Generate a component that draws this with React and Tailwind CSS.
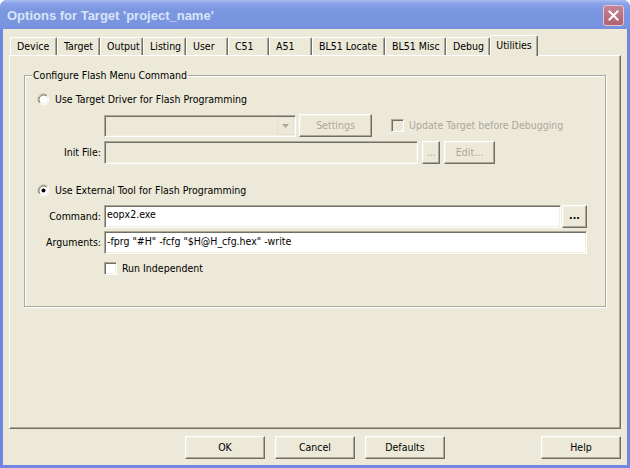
import React from "react";

const raised =
  "border border-t-white border-l-white border-r-[#716F64] border-b-[#716F64] shadow-[inset_-1px_-1px_0_#ACA899,inset_1px_1px_0_#F1EFE2] bg-[#ECE9D8]";
const sunken =
  "border border-t-[#ACA899] border-l-[#ACA899] border-r-white border-b-white shadow-[inset_1px_1px_0_#716F64,inset_-1px_-1px_0_#F1EFE2]";

function Radio({ checked }) {
  return (
    <svg width="13" height="13" viewBox="0 0 13 13" className="shrink-0">
      <circle cx="6.5" cy="6.5" r="5" fill="white" />
      <path d="M2.61 10.39 A5.5 5.5 0 0 1 10.39 2.61" stroke="#ACA899" fill="none" />
      <path d="M10.39 2.61 A5.5 5.5 0 0 1 2.61 10.39" stroke="#FFFFFF" fill="none" />
      <path d="M3.32 9.68 A4.5 4.5 0 0 1 9.68 3.32" stroke="#716F64" fill="none" />
      <path d="M9.68 3.32 A4.5 4.5 0 0 1 3.32 9.68" stroke="#F1EFE2" fill="none" />
      {checked && <circle cx="6.5" cy="6.5" r="2" fill="black" />}
    </svg>
  );
}

function Check({ disabled }) {
  return (
    <div
      className={`${sunken} w-[13px] h-[13px] shrink-0 ${
        disabled ? "bg-[#ECE9D8]" : "bg-white"
      }`}
    />
  );
}

function Btn({ children, w, h = "h-[23px]", disabled, extra = "" }) {
  return (
    <div
      className={`${raised} ${w} ${h} shrink-0 flex items-center justify-center ${
        disabled ? "text-[#ACA899]" : "text-black"
      } ${extra}`}
    >
      {children}
    </div>
  );
}

const tabs = [
  ["Device", "w-[47px]"],
  ["Target", "w-[43px]"],
  ["Output", "w-[43px]"],
  ["Listing", "w-[43px]"],
  ["User", "w-[42px]"],
  ["C51", "w-[41px]"],
  ["A51", "w-[43px]"],
  ["BL51 Locate", "w-[73px]"],
  ["BL51 Misc", "w-[61px]"],
  ["Debug", "w-[44px]"],
];

export default function App() {
  return (
    <div className="w-[630px] h-[468px] bg-white">
      <div className="w-[630px] h-[468px] rounded-t-[7px] bg-[#7186E0] flex flex-col overflow-hidden font-['DejaVu_Sans_Condensed','Liberation_Sans',sans-serif] text-[10.5px] text-black">
        {/* Title bar */}
        <div className="h-[29px] shrink-0 flex items-center justify-between pl-[7px] pr-[6px] bg-[linear-gradient(to_bottom,#A9BCF0_0%,#8AA3E8_12%,#7B97E0_35%,#7A95E0_80%,#7690DE_100%)]">
          <span className="font-['Liberation_Sans',sans-serif] font-bold text-[13px] text-[#D8E4F8] leading-none mt-[1px]">
            Options for Target 'project_name'
          </span>
          <div className="w-[21px] h-[21px] mt-[1px] rounded-[3px] border border-[#E6C3CC] bg-[linear-gradient(to_bottom,#C48595,#B06272)] flex items-center justify-center">
            <svg width="11" height="11" viewBox="0 0 11 11">
              <path d="M1.5 1.5 L9.5 9.5 M9.5 1.5 L1.5 9.5" stroke="white" strokeWidth="2" strokeLinecap="square" />
            </svg>
          </div>
        </div>

        {/* Client */}
        <div className="flex-1 mx-[3px] mb-[3px] bg-[#ECE9D8] flex flex-col">
          {/* Tabs */}
          <div className="mt-[6px] ml-[7px] h-[20px] flex items-end">
            {tabs.map(([t, w]) => (
              <div
                key={t}
                className={`${w} h-[18px] shrink-0 rounded-t-[2px] border-t border-l border-r border-t-white border-l-white border-r-[#716F64] shadow-[inset_-1px_0_0_#ACA899] flex items-center pl-[6px] pt-[1px] whitespace-nowrap`}
              >
                {t}
              </div>
            ))}
            <div className="relative z-10 w-[48px] h-[21px] -mb-[1px] shrink-0 rounded-t-[2px] border-t border-l border-r border-t-white border-l-white border-r-[#716F64] shadow-[inset_-1px_0_0_#ACA899] bg-[#ECE9D8] flex items-center justify-center pb-[1px]">
              Utilities
            </div>
          </div>

          {/* Panel */}
          <div className="ml-[6px] w-[612px] h-[374px] shrink-0 border border-t-white border-l-white border-r-[#716F64] border-b-[#716F64] shadow-[inset_-1px_-1px_0_#ACA899] flex flex-col">
            {/* Group box */}
            <div className="mt-[19px] ml-[14px] w-[582px] h-[232px] border border-[#ACA899] shadow-[inset_1px_1px_0_white,1px_1px_0_white] flex flex-col">
              <div className="-mt-[8px] ml-[7px] px-[1px] self-start bg-[#ECE9D8] leading-[14px] h-[14px] whitespace-nowrap">
                Configure Flash Menu Command
              </div>

              {/* Radio 1 */}
              <div className="mt-[11px] ml-[12px] h-[13px] flex items-center gap-[5px]">
                <Radio />
                <span className="whitespace-nowrap">Use Target Driver for Flash Programming</span>
              </div>

              {/* Combo row */}
              <div className="mt-[8px] ml-[79px] h-[23px] flex items-center">
                <div className={`${sunken} w-[192px] h-[22px] bg-[#ECE9D8] flex items-center justify-end pr-[1px]`}>
                  <div className="w-[17px] h-[18px] border border-[#E4E1D4] bg-[#ECE9D8] flex items-center justify-center">
                    <svg width="7" height="4" viewBox="0 0 7 4">
                      <path d="M0 0 H7 L3.5 4 Z" fill="#ACA899" />
                    </svg>
                  </div>
                </div>
                <Btn w="w-[73px]" disabled extra="ml-[3px]">
                  Settings
                </Btn>
                <div className="ml-[19px] flex items-center gap-[5px]">
                  <Check disabled />
                  <span className="text-[#ACA899] whitespace-nowrap">Update Target before Debugging</span>
                </div>
              </div>

              {/* Init file */}
              <div className="mt-[4px] h-[23px] flex items-center">
                <span className="w-[76px] text-right whitespace-nowrap">Init File:</span>
                <div className={`${sunken} ml-[3px] w-[314px] h-[23px] bg-[#ECE9D8]`} />
                <Btn w="w-[18px]" disabled extra="ml-[4px]">
                  ...
                </Btn>
                <Btn w="w-[51px]" disabled extra="ml-[4px]">
                  Edit...
                </Btn>
              </div>

              {/* Radio 2 */}
              <div className="mt-[20px] ml-[12px] h-[13px] flex items-center gap-[5px]">
                <Radio checked />
                <span className="whitespace-nowrap">Use External Tool for Flash Programming</span>
              </div>

              {/* Command */}
              <div className="mt-[8px] h-[23px] flex items-center">
                <span className="w-[76px] text-right whitespace-nowrap">Command:</span>
                <div className={`${sunken} ml-[3px] w-[457px] h-[23px] bg-white flex items-center pl-[2px] pb-[3px]`}>
                  eopx2.exe
                </div>
                <Btn w="w-[25px]" extra="ml-[1px] font-bold pb-[2px]">
                  ...
                </Btn>
              </div>

              {/* Arguments */}
              <div className="mt-[3px] h-[23px] flex items-center">
                <span className="w-[76px] text-right whitespace-nowrap">Arguments:</span>
                <div className={`${sunken} ml-[3px] w-[483px] h-[23px] bg-white flex items-center pl-[2px] pb-[1px] whitespace-nowrap`}>
                  -fprg "#H" -fcfg "$H@H_cfg.hex" -write
                </div>
              </div>

              {/* Run independent */}
              <div className="mt-[8px] ml-[79px] h-[13px] flex items-center gap-[5px]">
                <Check />
                <span className="whitespace-nowrap">Run Independent</span>
              </div>
            </div>
          </div>

          {/* Bottom buttons */}
          <div className="mt-[7px] pl-[182px] pr-[6px] flex items-center">
            <Btn w="w-[80px]">OK</Btn>
            <Btn w="w-[80px]" extra="ml-[10px]">
              Cancel
            </Btn>
            <Btn w="w-[80px]" extra="ml-[10px]">
              Defaults
            </Btn>
            <Btn w="w-[80px]" extra="ml-auto">
              Help
            </Btn>
          </div>
        </div>
      </div>
    </div>
  );
}
